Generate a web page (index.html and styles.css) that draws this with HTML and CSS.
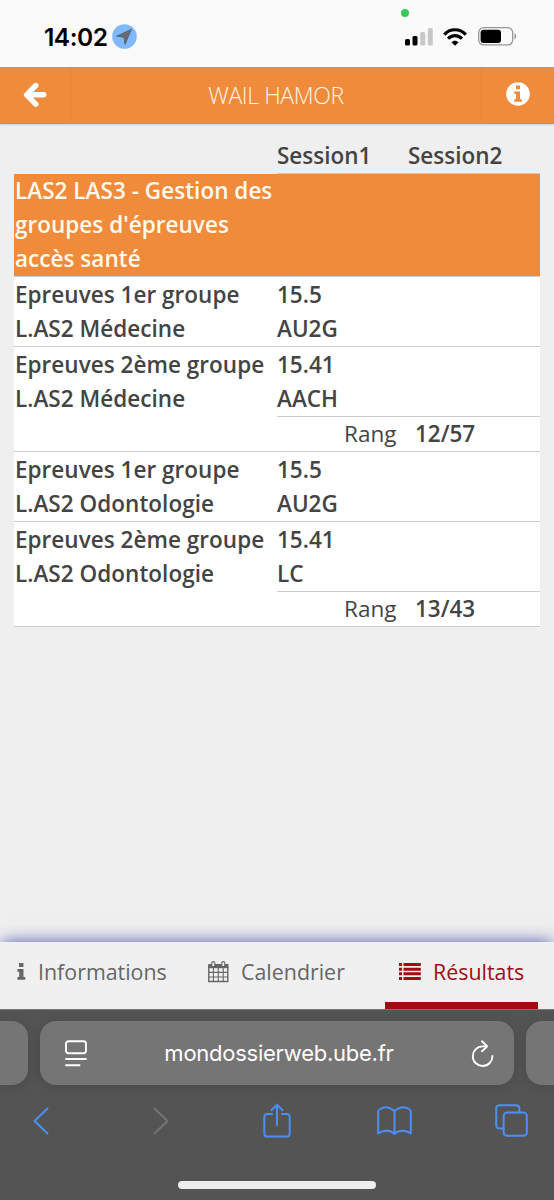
FILE: index.html
```html
<!DOCTYPE html>
<html lang="fr">
<head>
<meta charset="utf-8">
<title>Mon dossier web</title>
<link rel="stylesheet" href="styles.css">
</head>
<body>
<div class="screen">
  <div class="status">
    <span class="camera-dot"></span>
    <span class="time">14:02</span>
    <svg class="location" width="25" height="25" viewBox="0 0 25 25"><circle cx="12.5" cy="12.5" r="12.3" fill="#7fb9fb"/><path d="M19.5 5.3 4.8 12.2 12 13.2 13 20.2Z" fill="#706b6b" stroke="#47617f" stroke-width=".9" stroke-linejoin="round"/></svg>
    <svg class="signal" width="28" height="18" viewBox="0 0 28 18"><rect x="0" y="11" width="5" height="6.5" rx="1.5"/><rect x="7.5" y="8" width="5" height="9.5" rx="1.5"/><rect x="15.2" y="4" width="5" height="13.5" rx="1.5" fill="#c8c8c8"/><rect x="22.8" y="0" width="5" height="17.5" rx="1.5" fill="#c8c8c8"/></svg>
    <svg class="wifi" width="24" height="18" viewBox="0 0 24 18"><g fill="none" stroke="#000" stroke-width="3.2"><path d="M1.2 6.6C7.2.1 16.8.1 22.8 6.6"/><path d="M5.1 10.8c3.8-4.2 10-4.2 13.8 0"/></g><path d="M8.4 14.2c2.1-2.1 5.1-2.1 7.2 0L12 17.8Z"/></svg>
    <svg class="battery" width="39" height="19" viewBox="0 0 39 19"><rect x=".7" y=".7" width="34" height="17.2" rx="5" fill="none" stroke="#969696" stroke-width="1.3"/><rect x="2.6" y="2.7" width="20.4" height="13.2" rx="3"/><path d="M36.5 6.3c2.3.7 2.3 5.3 0 6Z" fill="#969696"/></svg>
  </div>
  <header class="bar">
    <button class="bar-btn left" aria-label="Retour"><svg width="24" height="26" viewBox="0 0 24 26"><path d="M12.8 4.5 3.6 13.8l9.2 9.3M4.5 13.8h16.2" fill="none" stroke="#fff" stroke-width="5.4" stroke-linecap="round" stroke-linejoin="round"/></svg></button>
    <h1>WAIL HAMOR</h1>
    <button class="bar-btn right" aria-label="Infos"><svg width="24" height="24" viewBox="0 0 24 24"><circle cx="12" cy="12" r="11.8" fill="#fff"/><path d="M10 3.5h4v3.8h-4ZM8.3 9.4H14v7.8h1.9v2.6H8.3v-2.6h1.8V12H8.3Z" fill="#ef8b3b"/></svg></button>
  </header>
  <main>
    <div class="results">
      <div class="row head"><div></div><div class="cell">Session1</div><div class="cell">Session2</div></div>
      <div class="row group"><div class="label">LAS2 LAS3 - Gestion des<br>groupes d'épreuves<br>accès santé</div></div>
      <div class="row"><div class="label">Epreuves 1er groupe<br>L.AS2 Médecine</div><div>15.5<br>AU2G</div></div>
      <div class="row"><div class="label">Epreuves 2ème groupe<br>L.AS2 Médecine</div><div>15.41<br>AACH</div><div class="rank"><span>Rang</span><b>12/57</b></div></div>
      <div class="row"><div class="label">Epreuves 1er groupe<br>L.AS2 Odontologie</div><div>15.5<br>AU2G</div></div>
      <div class="row"><div class="label">Epreuves 2ème groupe<br>L.AS2 Odontologie</div><div>15.41<br>LC</div><div class="rank"><span>Rang</span><b>13/43</b></div></div>
    </div>
  </main>
  <nav class="tabs">
    <a class="tab info"><svg width="9" height="17" viewBox="0 0 9 17"><path d="M2 0h4.5v4H2ZM.4 6h6.1v8h1.8v2.8H.4V14h1.8V8.8H.4Z" fill="currentColor"/></svg><span>Informations</span></a>
    <a class="tab cal"><svg width="21" height="22" viewBox="0 0 21 22"><path d="M.8 5.5h19v15H.8Z" fill="none" stroke="currentColor" stroke-width="1.4"/><path d="M.2 3h20.2v4.2H.2Z" fill="currentColor"/><path d="M5.4 7v13.5M10.3 7v13.5M15.2 7v13.5M.8 11.4h19M.8 16h19" stroke="currentColor" stroke-width="1.1"/><rect x="3.8" y=".6" width="3" height="5" rx="1.4" fill="#f0f0f0" stroke="currentColor" stroke-width="1.1"/><rect x="13.8" y=".6" width="3" height="5" rx="1.4" fill="#f0f0f0" stroke="currentColor" stroke-width="1.1"/></svg><span>Calendrier</span></a>
    <a class="tab active"><svg width="22" height="17" viewBox="0 0 22 17"><path d="M0 1.6h3M0 6.2h3M0 10.8h3M0 15.4h3M4.5 1.6h17.3M4.5 6.2h17.3M4.5 10.8h17.3M4.5 15.4h17.3" stroke="currentColor" stroke-width="3"/></svg><span>Résultats</span></a>
  </nav>
  <footer class="browser">
    <div class="address-row">
      <div class="side prev"></div>
      <div class="address">
        <svg width="22" height="27" viewBox="0 0 22 27" fill="none" stroke="#fff" stroke-width="1.9" stroke-linecap="round"><rect x="1" y="1.2" width="20" height="12" rx="2.5"/><path d="M1 19h20M1 25.2h13.5"/></svg>
        <span>mondossierweb.ube.fr</span>
        <svg width="23" height="27" viewBox="0 0 23 27" fill="none" stroke="#fff" stroke-width="1.9" stroke-linecap="round" stroke-linejoin="round"><path d="M14.8 6.4h-3.4A9.8 9.8 0 1 0 21.4 16M11 1.3l5.2 5.1-5.2 4.8"/></svg>
      </div>
      <div class="side next"></div>
    </div>
    <div class="tools">
      <svg width="16" height="28" viewBox="0 0 16 28"><path d="M14.5 1.5 1.5 14l13 12.5"/></svg>
      <svg class="disabled" width="16" height="28" viewBox="0 0 16 28"><path d="m1.5 1.5 13 12.5-13 12.5"/></svg>
      <svg width="28" height="36" viewBox="0 0 28 36"><path d="M9 11H4.5Q1.3 11 1.3 14.2v16.2q0 3.2 3.2 3.2h19q3.2 0 3.2-3.2V14.2q0-3.2-3.2-3.2H19M14 22V1.8M8.5 7.3 14 1.8l5.5 5.5"/></svg>
      <svg width="35" height="30" viewBox="0 0 35 30"><path d="M17.5 28C14 24 6 23.5 1.2 27.5V5.3Q1.2 4 3 3c5-3 11-2 14.5 2.2C21 1 27 0 32 3q1.8 1 1.8 2.3v22.2C29 23.5 21 24 17.5 28ZV5"/></svg>
      <svg width="33" height="33" viewBox="0 0 33 33"><path d="M8.6 24.4H4.8q-3.6 0-3.6-3.6v-16q0-3.6 3.6-3.6h16q3.6 0 3.6 3.6v3.8"/><rect x="8.6" y="8.6" width="23.2" height="23.2" rx="3.4"/></svg>
    </div>
    <div class="home"></div>
  </footer>
</div>
</body>
</html>
```
FILE: styles.css
```css
* { box-sizing: border-box; }
body { margin: 0; background: #efefef; color: #444; font-family: "Open Sans", sans-serif; }
.screen { width: 554px; height: 1200px; display: flex; flex-direction: column; overflow: hidden; }

.status { position: relative; height: 67px; flex: none; padding: 0 37px 0 44px; display: flex; align-items: flex-start; background: #fafafa; }
.camera-dot { position: absolute; left: 401px; top: 9px; width: 8px; height: 8px; border-radius: 50%; background: #35ca5b; }
.time { width: 68px; margin-top: 22px; color: #000; font: 600 24.5px/30px Inter, sans-serif; letter-spacing: -.5px; }
.location { margin-top: 24px; }
.signal { margin: 28px 10px 0 auto; }
.wifi { margin: 28px 11px 0 0; }
.battery { margin-top: 27px; }

.bar { height: 57px; flex: none; display: flex; align-items: stretch; background: #ef8b3b; border-bottom: 1px solid #e98738; box-shadow: 0 1px 2px #0002; }
.bar h1 { flex: 1; margin: 0; text-align: center; color: #fff5e6; font-size: 23px; font-weight: 300; line-height: 57px; letter-spacing: -.4px; }
.bar-btn { width: 70px; padding: 0 0 2px; border: 0; background: none; display: flex; align-items: center; justify-content: center; box-shadow: 0 0 2px #00000018; }
.bar-btn.right { width: 72px; }
.bar-btn svg { display: block; }

main { flex: 1; padding: 14px 14px 0; }
.results { font-size: 22.5px; font-weight: 600; line-height: 34px; }
.row { display: grid; grid-template-columns: 263px 263px; background: #fff; border-bottom: 1px solid #ccc; padding-top: 1px; }
.row.head { grid-template-columns: 263px 131px 132px; background: none; border: 0; padding: 0; }
.head .cell { border-bottom: 1px solid #d4c8bf; height: 36px; padding-top: 1px; }
.label { padding-left: 1px; letter-spacing: .03px; white-space: nowrap; }
.row.group { padding: 0; background: #ef8b3b; color: #fffaf0; }
.rank { grid-column: 2; border-top: 1px solid #ccc; display: flex; gap: 19px; padding-left: 67px; }
.rank span { width: 52px; font-weight: 400; }
.rank b { font-weight: 600; }

.tabs { height: 67px; flex: none; position: relative; display: flex; background: #f0f0f0; box-shadow: 0 -2px 16px -2px #4f59ad; clip-path: inset(-30px 0 0 0); color: #666; font-size: 21.4px; }
.tab { display: flex; align-items: center; height: 67px; padding-bottom: 8px; }
.tab.info { width: 208px; padding-left: 17px; gap: 12px; }
.tab.cal { width: 177px; gap: 12px; }
.tab.active { width: 153px; padding: 0 0 1px 14px; gap: 12px; color: #9f0c12; border-bottom: 7px solid #a00d11; }

.browser { height: 191px; flex: none; background: #545454; border-top: 1px solid #777; }
.address-row { display: flex; gap: 12px; margin-top: 11px; height: 64px; }
.side { width: 28px; background: #757575; border-radius: 0 16px 16px 0; box-shadow: 0 2px 14px #0002; }
.side.next { border-radius: 16px 0 0 16px; }
.address { width: 474px; border-radius: 16px; background: #757575; box-shadow: 0 2px 14px #0002; display: flex; align-items: center; justify-content: space-between; padding: 0 20px 0 25px; color: #fff; font: 400 22px Inter, sans-serif; letter-spacing: -.25px; }
.tools { display: grid; grid-template-columns: 82px 158px 74px 160px 74px; justify-items: center; align-items: center; height: 71px; fill: none; stroke: #4c8ff4; stroke-width: 2; stroke-linecap: round; stroke-linejoin: round; }
.tools .disabled { stroke: #747474; }
.home { width: 198px; height: 8px; margin: 25px auto 0; border-radius: 4px; background: #eee; }
```
